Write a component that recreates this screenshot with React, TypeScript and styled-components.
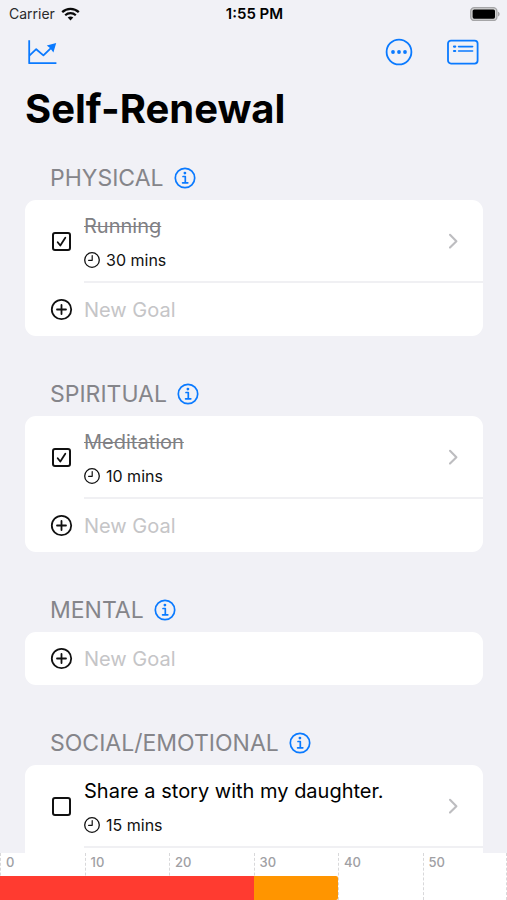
import React, { useState } from "react";
import styled, { createGlobalStyle } from "styled-components";

const BLUE = "#0a7aff";
const INK = "#111111";

const GlobalStyle = createGlobalStyle`
  *, *::before, *::after { box-sizing: border-box; }
  body {
    margin: 0;
    background: #f1f1f6;
    color: #000;
    font-family: Inter, "Liberation Sans", sans-serif;
  }
  button, input { font: inherit; color: inherit; }
`;

const Screen = styled.div`
  display: flex;
  flex-direction: column;
  height: 100vh;
  overflow: hidden;
`;

const StatusBar = styled.div`
  display: grid;
  grid-template-columns: 1fr auto 1fr;
  align-items: center;
  height: 28px;
  padding: 0 7px 0 9px;
  font-size: 14px;
  line-height: 20px;
`;

const Carrier = styled.div`
  display: flex;
  align-items: center;
  gap: 6px;
  color: #2a2a2c;
`;

const Clock = styled.div`
  font-size: 15px;
  font-weight: 600;
`;

const Battery = styled.div`
  display: flex;
  justify-content: flex-end;
`;

const NavBar = styled.nav`
  display: flex;
  align-items: center;
  height: 48px;
  padding: 0 28px 0 26px;
`;

const IconButton = styled.button`
  display: flex;
  padding: 0;
  border: 0;
  background: none;
  color: ${BLUE};
  cursor: pointer;
`;

const NavActions = styled.div`
  display: flex;
  align-items: center;
  gap: 34px;
  margin-left: auto;
`;

const Title = styled.h1`
  margin: 0;
  padding: 9px 25px 0;
  font-size: 40px;
  line-height: 48px;
  font-weight: 700;
`;

const Goals = styled.main`
  flex: 1;
  min-height: 0;
  overflow-y: auto;
  scrollbar-width: none;
  padding: 0 24px 0 25px;
`;

const Section = styled.section`
  padding-top: 31px;
  & + & {
    padding-top: 44px;
  }
`;

const SectionHeader = styled.header`
  display: flex;
  align-items: center;
  gap: 10px;
  height: 28px;
  margin-bottom: 8px;
  padding-left: 25px;
`;

const SectionTitle = styled.h2`
  margin: 0;
  font-size: 23px;
  line-height: 28px;
  font-weight: 400;
  color: #85858a;
`;

const Card = styled.ul`
  margin: 0;
  padding: 0;
  list-style: none;
  border-radius: 11px;
  background: #fff;
  overflow: hidden;
`;

const Row = styled.li`
  display: flex;
  gap: 11px;
  padding-left: 25px;
`;

const Lead = styled.div`
  display: grid;
  place-items: center;
  width: 23px;
  color: ${INK};
`;

const GoalBody = styled.div`
  flex: 1;
  display: flex;
  align-items: center;
  padding: 12px 24px 11px 0;
  border-bottom: 2px solid #f0f0f3;
`;

const GoalText = styled.div`
  flex: 1;
`;

const GoalName = styled.label<{ $done: boolean }>`
  display: block;
  font-size: 20px;
  line-height: 28px;
  color: ${(p) => (p.$done ? "#808084" : "#000")};
  text-decoration: ${(p) => (p.$done ? "line-through" : "none")};
  text-decoration-thickness: 1px;
`;

const Duration = styled.div`
  display: flex;
  align-items: center;
  gap: 6px;
  margin-top: 10px;
  font-size: 16px;
  line-height: 20px;
  color: ${INK};
`;

const Disclosure = styled(IconButton)`
  color: #bdbdc0;
`;

const CheckWrap = styled.span`
  display: grid;
  place-items: center;
  & > * {
    grid-area: 1 / 1;
  }
  svg {
    pointer-events: none;
  }
`;

const CheckInput = styled.input`
  appearance: none;
  width: 19px;
  height: 19px;
  margin: 0;
  border: 2px solid ${INK};
  border-radius: 3px;
  cursor: pointer;
`;

const NewGoalInput = styled.input`
  flex: 1;
  min-width: 0;
  height: 53px;
  padding: 0;
  border: 0;
  outline: 0;
  background: none;
  font-size: 20px;
  &::placeholder {
    color: #c5c5c7;
    opacity: 1;
  }
`;

const Chart = styled.footer`
  display: grid;
  grid-template-rows: 23px 24px;
  background: #fff;
`;

const Scale = styled.div`
  grid-area: 1 / 1 / 3 / 2;
  display: grid;
  grid-template-columns: repeat(6, 1fr);
`;

const Tick = styled.div`
  padding-left: 5px;
  border-left: 1px dashed #d8d8da;
  font-size: 13px;
  line-height: 19px;
  font-weight: 500;
  color: #a0a0a4;
  &:last-child {
    border-right: 1px dashed #d8d8da;
  }
`;

const Bars = styled.div`
  grid-area: 2 / 1 / 3 / 2;
  display: flex;
  z-index: 1;
`;

const Bar = styled.div<{ $color: string }>`
  background: ${(p) => p.$color};
  &:last-child {
    border-radius: 0 2px 2px 0;
  }
`;

const WifiIcon = () => (
  <svg width="19" height="14" viewBox="0 0 19 14" fill="none" stroke="#0a0a0a" aria-hidden="true">
    <path d="M1.2 5.1C5.8.8 13.2.8 17.8 5.1" strokeWidth="2.3" />
    <path d="M4.2 8.2C7.2 5.4 11.8 5.4 14.8 8.2" strokeWidth="2.2" />
    <path d="M9.5 13.4 6.7 10.6C8.3 9.2 10.7 9.2 12.3 10.6Z" fill="#0a0a0a" stroke="none" />
  </svg>
);

const BatteryIcon = () => (
  <svg width="30" height="14" viewBox="0 0 30 14" role="img" aria-label="Battery full">
    <rect x="0.7" y="0.7" width="26.2" height="12.8" rx="3.6" fill="#d2d2d2" stroke="#a5a5a7" strokeWidth="1.3" />
    <rect x="2.6" y="2.5" width="22.4" height="9.2" rx="1.6" fill="#000" />
    <path d="M28 4.8C30.2 5.4 30.2 8.8 28 9.4Z" fill="#a5a5a7" />
  </svg>
);

const TrendIcon = () => (
  <svg width="31" height="26" viewBox="0 0 31 26" fill="none" stroke="currentColor" strokeWidth="1.8" aria-hidden="true">
    <path d="M3.2 1.2V24.2H30.4" strokeLinejoin="round" />
    <path d="M3.4 16.6 10.2 10.2 17.4 16.4 25.2 8.8" strokeLinejoin="round" />
    <path d="M30.2 4 20.8 6.4 24 9 27.4 13.4Z" fill="currentColor" stroke="none" />
  </svg>
);

const MoreIcon = () => (
  <svg width="28" height="28" viewBox="0 0 28 28" fill="none" stroke="currentColor" aria-hidden="true">
    <circle cx="14" cy="14" r="12.4" strokeWidth="1.8" />
    <g fill="currentColor" stroke="none">
      <circle cx="8" cy="14" r="1.9" />
      <circle cx="14" cy="14" r="1.9" />
      <circle cx="20" cy="14" r="1.9" />
    </g>
  </svg>
);

const ListIcon = () => (
  <svg width="32" height="26" viewBox="0 0 32 26" fill="none" stroke="currentColor" aria-hidden="true">
    <rect x="1" y="1.6" width="29.6" height="23" rx="3" strokeWidth="1.8" />
    <path d="M11.6 7.6H25.6M11.6 12H25.6" strokeWidth="1.6" strokeLinecap="round" />
    <path d="M7 7.6H8.2M7 12H8.2" strokeWidth="2.2" strokeLinecap="round" />
  </svg>
);

const InfoIcon = () => (
  <svg width="22" height="22" viewBox="0 0 22 22" fill="none" stroke="currentColor" aria-hidden="true">
    <circle cx="11" cy="11" r="9.7" strokeWidth="1.7" />
    <circle cx="10.9" cy="6.1" r="1.4" fill="currentColor" stroke="none" />
    <path d="M9 9.5H11.3V15.8M8.6 15.8H13.8" strokeWidth="1.7" strokeLinecap="round" strokeLinejoin="round" />
  </svg>
);

const PlusIcon = () => (
  <svg width="23" height="23" viewBox="0 0 23 23" fill="none" stroke="currentColor" aria-hidden="true">
    <circle cx="11.5" cy="11.5" r="9.7" strokeWidth="1.8" />
    <path d="M11.5 7V16M7 11.5H16" strokeWidth="1.8" strokeLinecap="round" />
  </svg>
);

const CheckIcon = () => (
  <svg width="19" height="19" viewBox="0 0 19 19" fill="none" stroke={INK} aria-hidden="true">
    <path d="M5.7 10.2 8.3 13.5 13.3 5.8" strokeWidth="1.8" strokeLinecap="round" strokeLinejoin="round" />
  </svg>
);

const TimeIcon = () => (
  <svg width="16" height="16" viewBox="0 0 16 16" fill="none" stroke="currentColor" aria-hidden="true">
    <circle cx="8" cy="8" r="7.3" strokeWidth="1.3" />
    <path d="M8.2 3.6V8.3H4.6" strokeWidth="1.2" strokeLinecap="round" strokeLinejoin="round" />
  </svg>
);

const ChevronIcon = () => (
  <svg width="12" height="18" viewBox="0 0 12 18" fill="none" stroke="currentColor" aria-hidden="true">
    <path d="M3 2.8 9.4 9.2 3 15.6" strokeWidth="2.1" strokeLinecap="round" strokeLinejoin="round" />
  </svg>
);

type Goal = { id: string; name: string; minutes: number; done: boolean };
type Group = { id: string; title: string; goals: Goal[] };

const initialGroups: Group[] = [
  { id: "physical", title: "PHYSICAL", goals: [{ id: "run", name: "Running", minutes: 30, done: true }] },
  { id: "spiritual", title: "SPIRITUAL", goals: [{ id: "meditate", name: "Meditation", minutes: 10, done: true }] },
  { id: "mental", title: "MENTAL", goals: [] },
  {
    id: "social",
    title: "SOCIAL/EMOTIONAL",
    goals: [{ id: "story", name: "Share a story with my daughter.", minutes: 15, done: false }],
  },
];

const barColors: Record<string, string> = {
  physical: "#ff3b30",
  spiritual: "#ff9500",
  mental: "#34c759",
  social: "#007aff",
};

const SCALE_MAX = 60;

export default function App() {
  const [groups, setGroups] = useState(initialGroups);

  const toggle = (goalId: string) =>
    setGroups((all) =>
      all.map((g) => ({
        ...g,
        goals: g.goals.map((goal) => (goal.id === goalId ? { ...goal, done: !goal.done } : goal)),
      })),
    );

  const totals = groups
    .map((g) => ({ id: g.id, minutes: g.goals.reduce((sum, goal) => sum + (goal.done ? goal.minutes : 0), 0) }))
    .filter((t) => t.minutes > 0);

  return (
    <>
      <GlobalStyle />
      <Screen>
        <StatusBar>
          <Carrier>
            Carrier <WifiIcon />
          </Carrier>
          <Clock>1:55 PM</Clock>
          <Battery>
            <BatteryIcon />
          </Battery>
        </StatusBar>
        <NavBar>
          <IconButton aria-label="Progress">
            <TrendIcon />
          </IconButton>
          <NavActions>
            <IconButton aria-label="More">
              <MoreIcon />
            </IconButton>
            <IconButton aria-label="Lists">
              <ListIcon />
            </IconButton>
          </NavActions>
        </NavBar>
        <Title>Self-Renewal</Title>
        <Goals>
          {groups.map((group) => (
            <Section key={group.id}>
              <SectionHeader>
                <SectionTitle>{group.title}</SectionTitle>
                <IconButton aria-label={`About ${group.title}`}>
                  <InfoIcon />
                </IconButton>
              </SectionHeader>
              <Card>
                {group.goals.map((goal) => (
                  <Row key={goal.id}>
                    <Lead>
                      <CheckWrap>
                        <CheckInput
                          type="checkbox"
                          id={goal.id}
                          checked={goal.done}
                          onChange={() => toggle(goal.id)}
                        />
                        {goal.done && <CheckIcon />}
                      </CheckWrap>
                    </Lead>
                    <GoalBody>
                      <GoalText>
                        <GoalName htmlFor={goal.id} $done={goal.done}>
                          {goal.name}
                        </GoalName>
                        <Duration>
                          <TimeIcon />
                          {goal.minutes} mins
                        </Duration>
                      </GoalText>
                      <Disclosure aria-label={`Open ${goal.name}`}>
                        <ChevronIcon />
                      </Disclosure>
                    </GoalBody>
                  </Row>
                ))}
                <Row>
                  <Lead>
                    <PlusIcon />
                  </Lead>
                  <NewGoalInput placeholder="New Goal" aria-label={`New goal in ${group.title}`} />
                </Row>
              </Card>
            </Section>
          ))}
        </Goals>
        <Chart>
          <Scale>
            {[0, 10, 20, 30, 40, 50].map((n) => (
              <Tick key={n}>{n}</Tick>
            ))}
          </Scale>
          <Bars>
            {totals.map((t) => (
              <Bar key={t.id} $color={barColors[t.id]} style={{ width: `${(t.minutes / SCALE_MAX) * 100}%` }} />
            ))}
          </Bars>
        </Chart>
      </Screen>
    </>
  );
}
